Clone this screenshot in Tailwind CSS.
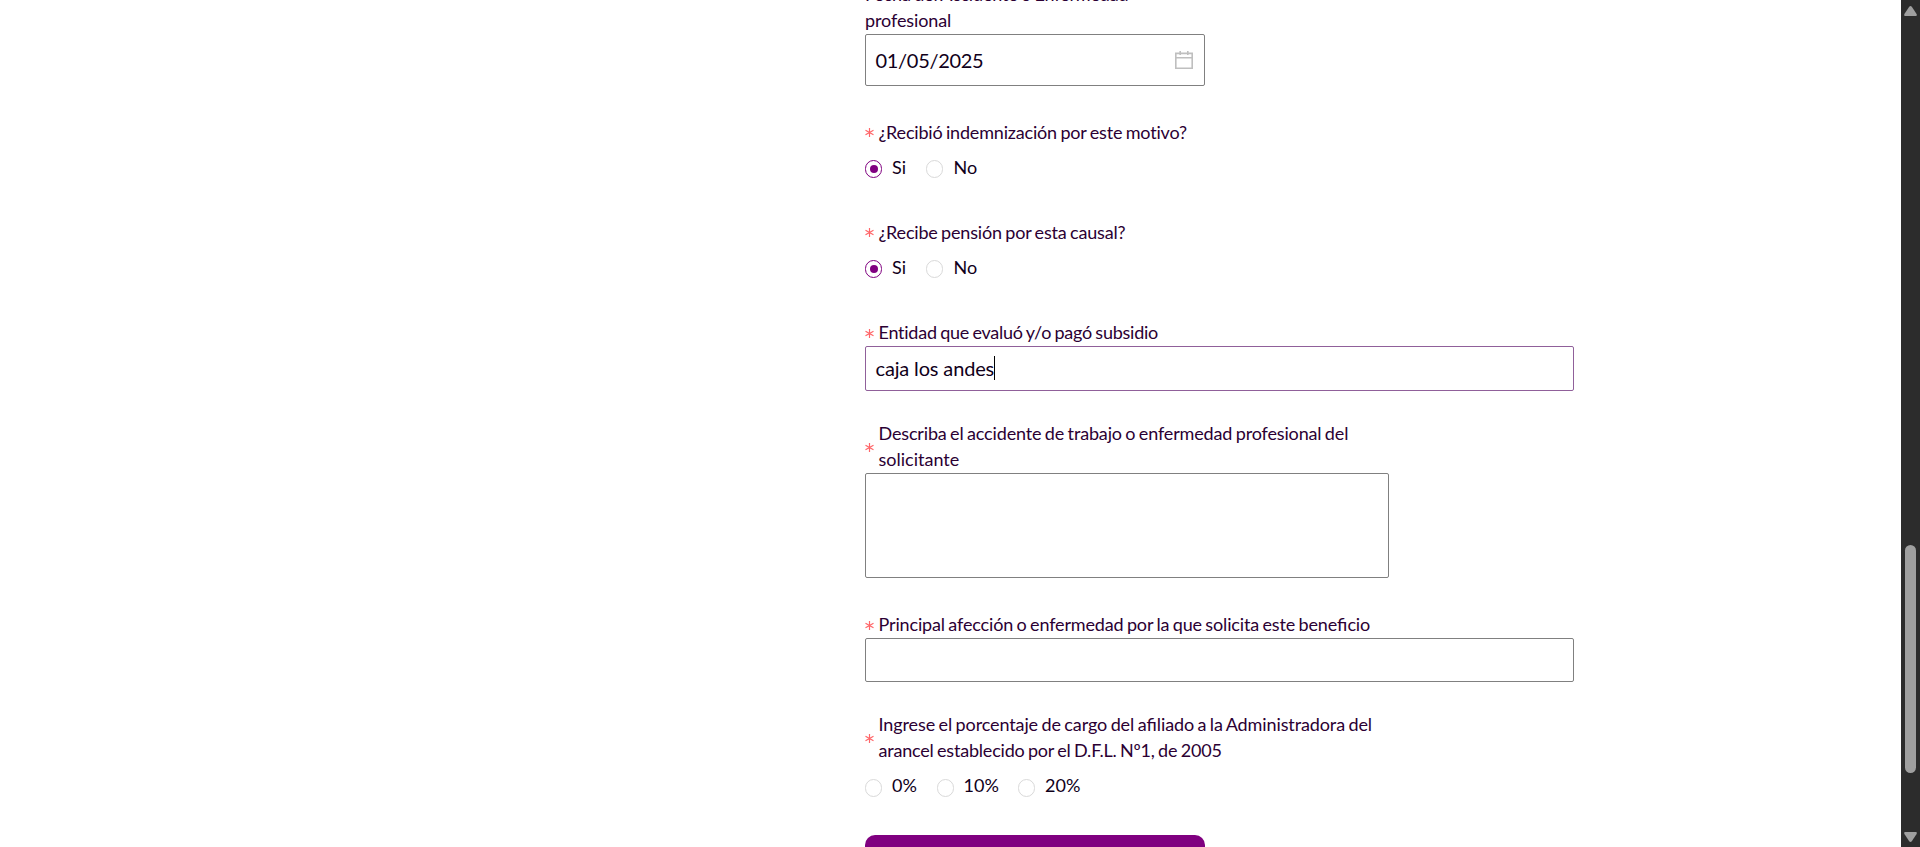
<!DOCTYPE html>
<html lang="es">
<head>
<meta charset="utf-8">
<title>Formulario</title>
<script src="https://cdn.jsdelivr.net/npm/@tailwindcss/browser@4"></script>
</head>
<body class="h-[847px] overflow-hidden bg-white font-['Lato',sans-serif] text-[18px] leading-[26px] text-[#2b0033]">
<svg class="hidden"><symbol id="req" viewBox="0 0 9 9"><path d="M4.5 0v9M.5 2.2l8 4.6M.5 6.8l8-4.6" stroke="#ff6669" stroke-width="1.2"/></symbol></svg>
<div class="flex h-[847px] overflow-hidden">
  <main class="-mt-[18px] flex flex-1 flex-col items-start pl-[865px]">
    <section class="h-[138px] shrink-0">
      <div class="relative -top-px w-[300px] tracking-[-0.16px] [word-spacing:-1px]">Fecha del Accidente o Enfermedad <span class="tracking-[-0.1px]">profesional</span></div>
      <div class="flex h-[52px] w-[340px] items-center justify-between rounded-[2px] border border-[#808080] pr-[11px] pl-[9.5px] text-[20px] text-[#10001a]">
        <span class="tracking-[-0.3px]">01/05/2025</span>
        <svg class="size-[18px]" viewBox="0 0 18 18" fill="none" stroke="#bfbfbf" stroke-width="1.6"><path d="M.8 2.4h16.4v14.8H.8zM.8 6.8h16.4M5.2 0v4M12.8 0v4"/></svg>
      </div>
    </section>
    <section class="h-[100px] shrink-0">
      <div class="flex items-center"><span class="w-[13.5px]"><svg class="size-[9px]"><use href="#req"/></svg></span><span class="-mt-px tracking-[-0.18px] [word-spacing:-1px]">¿Recibió indemnización por este motivo?</span></div>
      <div class="mt-[9px] flex text-[#10001a]">
        <label class="flex w-[61px]"><span class="mt-[6px] mr-[10px] flex h-[18px] w-[17px] items-center justify-center rounded-full border border-[#800080]"><span class="size-2 rounded-full bg-[#800080]"></span></span>Si</label>
        <label class="flex"><span class="mt-[6px] mr-[10.5px] h-[18px] w-[17px] rounded-full border border-[#d9d9d9]"></span>No</label>
      </div>
    </section>
    <section class="h-[100px] shrink-0">
      <div class="flex items-center"><span class="w-[13.5px]"><svg class="size-[9px]"><use href="#req"/></svg></span><span class="-mt-px tracking-[-0.18px] [word-spacing:-1px]">¿Recibe pensión por esta causal?</span></div>
      <div class="mt-[9px] flex text-[#10001a]">
        <label class="flex w-[61px]"><span class="mt-[6px] mr-[10px] flex h-[18px] w-[17px] items-center justify-center rounded-full border border-[#800080]"><span class="size-2 rounded-full bg-[#800080]"></span></span>Si</label>
        <label class="flex"><span class="mt-[6px] mr-[10.5px] h-[18px] w-[17px] rounded-full border border-[#d9d9d9]"></span>No</label>
      </div>
    </section>
    <section class="h-[101px] shrink-0">
      <div class="flex h-[26px] items-center"><span class="w-[13.5px]"><svg class="size-[9px]"><use href="#req"/></svg></span><span class="mb-[2px] tracking-[-0.24px] [word-spacing:-1px]">Entidad que evaluó y/o pagó subsidio</span></div>
      <div class="flex h-[45px] w-[709px] items-center rounded-[2px] border border-[#90609a] pb-px pl-[9.5px] text-[20px] text-[#10001a]"><span class="mb-px tracking-[-0.15px]">caja los andes</span><span class="h-6 w-px bg-black"></span></div>
    </section>
    <section class="h-[191px] shrink-0">
      <div class="flex h-[52px] w-[524px] items-center"><span class="w-[13.5px] shrink-0"><svg class="size-[9px]"><use href="#req"/></svg></span><span class="mb-[2px] tracking-[-0.15px] whitespace-nowrap [word-spacing:-1px]">Describa el accidente de trabajo o enfermedad profesional del<br><span class="tracking-normal">solicitante</span></span></div>
      <div class="h-[105px] w-[524px] rounded-[2px] border border-[#808080]"></div>
    </section>
    <section class="h-[100px] shrink-0">
      <div class="flex h-[26px] items-center"><span class="w-[13.5px]"><svg class="size-[9px]"><use href="#req"/></svg></span><span class="mb-[3px] tracking-[-0.15px] [word-spacing:-1px]">Principal afección o enfermedad por la que solicita este bene<span class="tracking-normal">fi</span>cio</span></div>
      <div class="h-[44px] w-[709px] rounded-[2px] border border-[#808080]"></div>
    </section>
    <section class="h-[123px] shrink-0">
      <div class="flex h-[52px] w-[524px] items-center"><span class="w-[13.5px] shrink-0"><svg class="size-[9px]"><use href="#req"/></svg></span><span class="mb-[2px] tracking-[-0.11px] whitespace-nowrap [word-spacing:-1px]">Ingrese el porcentaje de cargo del a<span class="tracking-normal">fi</span>liado a la Administradora del<br><span class="tracking-[-0.2px]">arancel establecido por el D.F.L. Nº1, de 2005</span></span></div>
      <div class="mt-[8px] flex text-[#10001a]">
        <label class="flex w-[71.5px]"><span class="mt-[7px] mr-[10px] h-[18px] w-[17px] rounded-full border border-[#d9d9d9]"></span>0%</label>
        <label class="flex w-[81.5px]"><span class="mt-[7px] mr-[10px] h-[18px] w-[17px] rounded-full border border-[#d9d9d9]"></span>10%</label>
        <label class="flex"><span class="mt-[7px] mr-[10px] h-[18px] w-[17px] rounded-full border border-[#d9d9d9]"></span>20%</label>
      </div>
    </section>
    <button class="h-[50px] w-[340px] shrink-0 rounded-[10px] bg-[#800080]"></button>
  </main>
  <aside class="flex w-[19px] flex-col items-center bg-[#2c2c2c]">
    <svg class="mt-[6px] h-[10px] w-[13px]" viewBox="0 0 13 10" fill="#9f9f9f"><path d="M5.2.8Q6.5-.8 7.8.8L12.6 8Q13.2 10 12 10H1Q-.2 10 .4 8Z"/></svg>
    <div class="mt-[529px] h-[228px] w-[11px] rounded-full bg-[#9f9f9f]"></div>
    <svg class="mt-[59px] h-[10px] w-[13px]" viewBox="0 0 13 10" fill="#9f9f9f"><path d="M5.2 9.2Q6.5 10.8 7.8 9.2L12.6 2Q13.2 0 12 0H1Q-.2 0 .4 2Z"/></svg>
  </aside>
</div>
</body>
</html>
